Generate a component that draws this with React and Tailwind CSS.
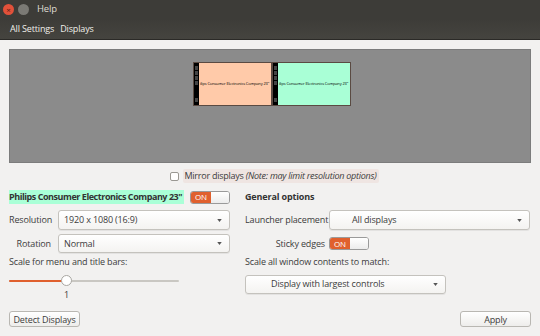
import { useState } from 'react';

function Switch({ on = true }) {
  return (
    <div className="flex h-[13px] w-[40px] overflow-hidden rounded-[3px] border border-[#9a9a9a] bg-white">
      <div className="flex w-[20px] items-center justify-center bg-[#e0602e] text-[8px] leading-none text-white">
        {on ? 'ON' : ''}
      </div>
      <div className="flex-1 bg-gradient-to-b from-white to-[#ececec]" />
    </div>
  );
}

function Select({ value, className = '', indent = 'pl-[5px]' }) {
  return (
    <div
      className={`flex items-center justify-between rounded-[3px] border border-[#c4c2bd] bg-gradient-to-b from-white to-[#f4f3f1] pr-[7px] text-[9px] text-[#3c3c3c] shadow-[0_1px_0_rgba(0,0,0,0.06)] ${indent} ${className}`}
    >
      <span>{value}</span>
      <svg width="5" height="3" viewBox="0 0 6 4">
        <path d="M0 0h6L3 4z" fill="#555" />
      </svg>
    </div>
  );
}

function Monitor({ color }) {
  return (
    <div className="flex h-[44px] w-[79px] border border-[#5a4a42]">
      <div className="flex w-[5px] flex-col items-center gap-[1px] bg-black pt-[3px]">
        {[0, 1, 2, 3].map((i) => (
          <div key={i} className="h-[4px] w-[3px] bg-[#444]" />
        ))}
        <div className="mt-auto mb-[3px] h-[4px] w-[3px] bg-[#444]" />
      </div>
      <div className={`flex flex-1 items-center justify-center overflow-hidden whitespace-nowrap text-[4px] text-black ${color}`}>
        ilips Consumer Electronics Company 23"
      </div>
    </div>
  );
}

export default function App() {
  const [mirror, setMirror] = useState(false);

  return (
    <div
      className="flex h-[336px] w-[540px] flex-col overflow-hidden whitespace-nowrap bg-[#f2f1f0] text-[9px] tracking-[-0.15px] text-[#3c3c3c]"
      style={{ fontFamily: '"Open Sans", "DejaVu Sans", sans-serif' }}
    >
      {/* title bar */}
      <div className="flex h-[19px] items-center bg-[#3d3c38] px-[3px] text-[9.5px] text-[#dfdbd2]">
        <div className="flex h-[11px] w-[11px] items-center justify-center rounded-full bg-[#e2513a]">
          <span className="text-[8px] leading-none text-[#5a1d12]">×</span>
        </div>
        <div className="ml-[4px] h-[11px] w-[11px] rounded-full bg-[#7b7a75]" />
        <span className="ml-[8px]">Help</span>
      </div>

      {/* toolbar */}
      <div className="flex h-[21px] items-center gap-[6px] border-b border-[#2b2a27] bg-gradient-to-b from-[#3d3c38] to-[#45443f] px-[10px] text-[9px] text-[#f0eee9]">
        <span>All Settings</span>
        <span>Displays</span>
      </div>

      <div className="flex flex-1 flex-col px-[9px] pt-[9px]">
        {/* arrangement canvas */}
        <div className="flex h-[114px] justify-center border border-[#7c7c7c] bg-[#8b8b8b] pt-[12px]">
          <div className="flex h-[46px] pl-[3px]">
            <Monitor color="bg-[#ffcaa9]" />
            <Monitor color="bg-[#a9ffd6]" />
          </div>
        </div>

        {/* mirror */}
        <div className="mt-[5px] flex h-[16px] items-center justify-center pl-[8px]">
          <button
            onClick={() => setMirror(!mirror)}
            className="mr-[4px] h-[9px] w-[9px] rounded-[2px] border border-[#9a9893] bg-white"
          />
          <span className="rounded-[2px] bg-[#efe5e2] px-[2px] tracking-[-0.25px]">
            Mirror displays <i>(Note: may limit resolution options)</i>
          </span>
        </div>

        <div className="mt-[5px] flex">
          {/* left column */}
          <div className="flex w-[236px] flex-col">
            <div className="flex h-[16px] w-[221px] items-center justify-between">
              <span className="bg-[#aaffd7] pr-[2px] font-bold tracking-[-0.45px] text-[#333]">
                Philips Consumer Electronics Company 23"
              </span>
              <Switch />
            </div>
            <div className="mt-[5px] flex items-center">
              <span className="w-[49px]">Resolution</span>
              <Select value="1920 x 1080 (16:9)" className="h-[20px] w-[172px]" />
            </div>
            <div className="mt-[4px] flex items-center">
              <span className="w-[49px] pr-[7px] text-right">Rotation</span>
              <Select value="Normal" className="h-[19px] w-[172px]" />
            </div>
            <div className="mt-[2px]">Scale for menu and title bars:</div>
            <div className="relative mt-[9px] h-[6px] w-[170px]">
              <div className="absolute top-[2px] left-0 h-[2px] w-full rounded bg-[#c9c7c2]" />
              <div className="absolute top-[2px] left-0 h-[2px] w-[57px] rounded bg-[#e0602e]" />
              <div className="absolute top-[-3px] left-[52px] h-[11px] w-[11px] rounded-full border border-[#a9a7a2] bg-white" />
            </div>
            <div className="mt-[4px] w-[115px] text-center">1</div>
          </div>

          {/* right column */}
          <div className="flex flex-1 flex-col">
            <div className="flex h-[16px] items-center font-bold text-[#333]">General options</div>
            <div className="mt-[5px] flex items-center">
              <span className="w-[84px]">Launcher placement</span>
              <Select value="All displays" indent="pl-[22px]" className="h-[20px] w-[201px]" />
            </div>
            <div className="mt-[4px] flex h-[19px] items-center">
              <span className="w-[84px] pr-[4px] text-right">Sticky edges</span>
              <Switch />
            </div>
            <div className="mt-[2px]">Scale all window contents to match:</div>
            <Select
              value="Display with largest controls"
              indent="pl-[25px]"
              className="mt-[6px] h-[19px] w-[201px]"
            />
          </div>
        </div>

        {/* bottom buttons */}
        <div className="mt-auto mb-[9px] flex justify-between">
          <button className="h-[16px] w-[71px] rounded-[3px] border border-[#b9b7b2] bg-gradient-to-b from-white to-[#eeedeb] leading-none">
            Detect Displays
          </button>
          <button className="h-[16px] w-[71px] rounded-[3px] border border-[#b9b7b2] bg-gradient-to-b from-white to-[#eeedeb] leading-none">
            Apply
          </button>
        </div>
      </div>
    </div>
  );
}
